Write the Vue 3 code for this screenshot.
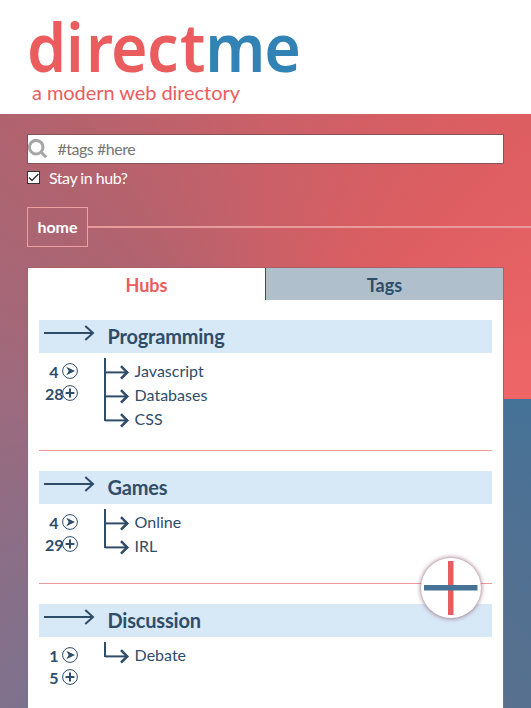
<script setup>
import { ref } from 'vue'

const query = ref('')
const stay = ref(true)
const hubs = [
  { name: 'Programming', subs: 4, posts: 28, items: ['Javascript', 'Databases', 'CSS'], height: 97 },
  { name: 'Games', subs: 4, posts: 29, items: ['Online', 'IRL'], height: 79 },
  { name: 'Discussion', subs: 1, posts: 5, items: ['Debate'], height: 79 }
]
</script>

<template>
  <div class="page">
    <header class="header">
      <svg class="logo" width="280" height="62" viewBox="0 0 280 62">
        <g transform="scale(0.95 1)">
          <text class="logo-direct" x="-1 40 61 87.4 125.4 160" y="56.6">direct</text>
          <text class="logo-me" x="186.6 248.6" y="56.6">me</text>
        </g>
      </svg>
      <div class="tagline">a modern web directory</div>
    </header>

    <main class="main">
      <label class="search">
        <svg class="lens" width="20" height="20" viewBox="0 0 20 20">
          <circle cx="8.2" cy="8.2" r="6.8" />
          <path d="M13 13 L18.2 18.2" />
        </svg>
        <input v-model="query" class="field" type="text" placeholder="#tags #here" />
      </label>

      <label class="stay" @click.prevent="stay = !stay">
        <span class="check">
          <svg v-if="stay" width="11" height="11" viewBox="0 0 11 11"><path d="M1 5.4 L4 8.6 L10.4 2" /></svg>
        </span>
        <span>Stay in hub?</span>
      </label>

      <nav class="crumbs">
        <span class="crumb">home</span>
        <span class="rail"></span>
      </nav>

      <section class="panel">
        <div class="tabs">
          <div class="tab active">Hubs</div>
          <div class="tab idle">Tags</div>
        </div>
        <div class="hubs">
          <article v-for="hub in hubs" :key="hub.name" class="hub">
            <h2 class="bar">
              <svg class="long-arrow" width="52" height="18" viewBox="0 0 52 18">
                <path d="M0 9 H49 M41.3 2 L49 9 L41.3 16" />
              </svg>
              <span>{{ hub.name }}</span>
            </h2>
            <div class="body" :style="{ height: hub.height + 'px' }">
              <div class="stats">
                <div class="stat">
                  <b>{{ hub.subs }}</b>
                  <svg class="badge" width="16" height="16" viewBox="0 0 16 16">
                    <circle cx="8" cy="8" r="7.4" />
                    <path class="solid" d="M4.3 3.8 L13 8 L4.3 12.2 L6.7 8 Z" />
                  </svg>
                </div>
                <div class="stat">
                  <b>{{ hub.posts }}</b>
                  <svg class="badge" width="16" height="16" viewBox="0 0 16 16">
                    <circle cx="8" cy="8" r="7.4" />
                    <path class="plus" d="M3.6 8 H12.4 M8 3.6 V12.4" />
                  </svg>
                </div>
              </div>
              <ul class="tree">
                <li v-for="(item, i) in hub.items" :key="item" class="leaf">
                  <svg class="branch" width="27" height="24" viewBox="0 0 27 24">
                    <path class="trunk" :d="i === hub.items.length - 1 ? 'M1 0 V15' : 'M1 0 V24'" />
                    <path class="twig" d="M1 14.4 H24" />
                    <path class="head" d="M17 8.2 L23.2 14.4 L17 20.6" />
                  </svg>
                  <span>{{ item }}</span>
                </li>
              </ul>
            </div>
          </article>
        </div>
      </section>
    </main>

    <button class="fab" aria-label="Add">
      <svg width="54" height="54" viewBox="0 0 54 54">
        <rect x="24" y="0" width="5.5" height="54" fill="#e85c5e" />
        <rect x="0" y="24" width="53.5" height="5.5" fill="#467297" />
      </svg>
    </button>
  </div>
</template>

<style>
body {
  overflow: hidden;
}
</style>

<style scoped>
.page {
  position: relative;
  height: 708px;
  overflow: hidden;
  font-family: Lato, "Liberation Sans", sans-serif;
  font-size: 16px;
  color: #2f4d69;
  background: conic-gradient(from 90deg at 50% 50%, #457297, #58708f 14%, #7f718c 36%, #9d6a7e 50%, #b0636f 63%, #ca6068 75%, #dd5e61 87%, #f06668) 0 0 / 100% 798px no-repeat;
}
.header {
  box-sizing: border-box;
  height: 114px;
  padding: 15px 0 0 28px;
  background: #fff;
}
.logo {
  display: block;
  overflow: visible;
  font-family: "Noto Sans", sans-serif;
  font-size: 66px;
  font-weight: 570;
}
.logo-direct {
  fill: #eb5c5e;
}
.logo-me {
  fill: #3182b5;
}
.tagline {
  padding: 3px 0 0 4px;
  font-size: 20px;
  line-height: 24px;
  letter-spacing: -0.06px;
  color: #eb5c5e;
}
.main {
  padding: 20px 27px 0;
}
.search {
  display: flex;
  align-items: center;
  box-sizing: border-box;
  height: 30px;
  border: 1px solid #83545a;
  background: #fff;
}
.lens {
  fill: none;
  stroke: #a6a6a6;
  stroke-width: 3;
}
.field {
  flex: 1;
  margin: 0;
  padding: 0 0 2px 9.5px;
  border: 0;
  outline: 0;
  background: transparent;
  font: 16px Lato, sans-serif;
  letter-spacing: -0.48px;
}
.field::placeholder {
  color: #757575;
}
.stay {
  display: flex;
  align-items: center;
  gap: 9px;
  height: 20px;
  margin-top: 3px;
  letter-spacing: -0.48px;
  color: #fff;
}
.check {
  display: flex;
  box-sizing: border-box;
  width: 13px;
  height: 13px;
  border: 1px solid #333;
  background: #fff;
}
.check path {
  fill: none;
  stroke: #333;
  stroke-width: 1.4;
}
.crumbs {
  display: flex;
  align-items: center;
  margin: 20px -27px 0 0;
}
.crumb {
  box-sizing: border-box;
  width: 61px;
  height: 40px;
  border: 1px solid #eea0a1;
  line-height: 38px;
  text-align: center;
  font-weight: 700;
  color: #fff;
}
.rail {
  flex: 1;
  height: 2px;
  background: #e99b9c;
}
.panel {
  box-sizing: border-box;
  height: 520px;
  margin-top: 20px;
  border: 1px solid #a95f63;
  background: #fff;
}
.tabs {
  display: flex;
  height: 32px;
  font-size: 18px;
  font-weight: 700;
  line-height: 34px;
  text-align: center;
}
.tab {
  flex: 1;
}
.active {
  color: #eb5c5e;
}
.idle {
  border-left: 1px solid #862f32;
  background: #afc0cc;
}
.hubs {
  padding: 20px 11px 0;
}
.hub + .hub {
  margin-top: 20px;
}
.hub:not(:last-child) {
  border-bottom: 1px solid #ee9b9c;
}
.bar {
  display: flex;
  height: 33px;
  margin: 0;
  padding-left: 5px;
  background: #d7e8f6;
  font-size: 20px;
  line-height: 33px;
  letter-spacing: -0.2px;
}
.long-arrow {
  margin: 4px 11.5px 0 0;
  fill: none;
  stroke: #2f4d69;
  stroke-width: 2;
}
.body {
  display: flex;
}
.stats {
  width: 65px;
  padding-top: 7px;
}
.stat {
  display: flex;
  align-items: center;
  height: 22px;
}
.stat b {
  width: 18px;
  margin-left: 6px;
  text-align: center;
  white-space: nowrap;
}
.badge {
  flex: none;
  margin-left: -1px;
}
.badge circle {
  fill: none;
  stroke: #2f4d69;
  stroke-width: 1;
}
.solid {
  fill: #2f4d69;
}
.plus {
  stroke: #2f4d69;
  stroke-width: 2;
}
.tree {
  margin: 0;
  padding: 5px 0 0;
  list-style: none;
}
.leaf {
  display: flex;
  height: 24px;
  gap: 3.6px;
  line-height: 25px;
}
.branch {
  display: block;
  fill: none;
  stroke: #2f4d69;
}
.trunk,
.twig {
  stroke-width: 2;
}
.head {
  stroke-width: 2.6;
}
.fab {
  position: absolute;
  left: 421px;
  top: 558px;
  display: flex;
  align-items: center;
  justify-content: center;
  width: 60px;
  height: 60px;
  padding: 0;
  border: 0;
  border-radius: 50%;
  background: #fff;
  box-shadow: 0 0 5px #8a5a70;
}
.fab svg {
  flex: none;
}
</style>
